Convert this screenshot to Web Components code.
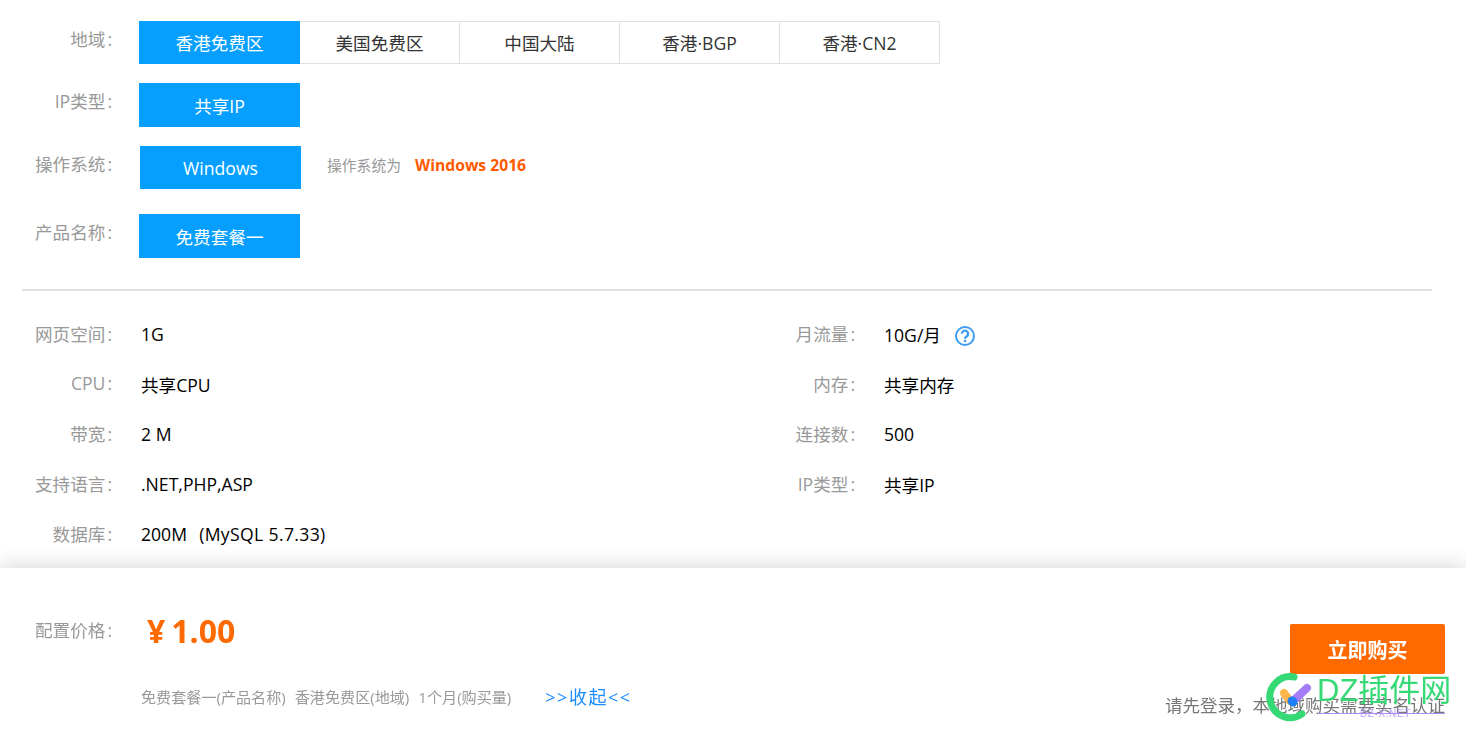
<!DOCTYPE html>
<html lang="zh">
<head>
<meta charset="utf-8">
<title>配置</title>
<style>
    html, body {
        margin: 0;
        height: 737px;
        overflow: hidden;
        background: #fff;
        font-family: "Open Sans", "Noto Sans CJK SC", sans-serif;
    }
</style>
</head>
<body>
<option-row label="地域" top="21">
    <option-btn active>香港免费区</option-btn>
    <option-btn>美国免费区</option-btn>
    <option-btn>中国大陆</option-btn>
    <option-btn>香港·BGP</option-btn>
    <option-btn>香港·CN2</option-btn>
</option-row>
<option-row label="IP类型" top="19">
    <option-btn active tall>共享IP</option-btn>
</option-row>
<option-row label="操作系统" top="19" shift>
    <option-btn active>Windows</option-btn>
    <os-note></os-note>
</option-row>
<option-row label="产品名称" top="25">
    <option-btn active tall>免费套餐一</option-btn>
</option-row>
<spec-table></spec-table>
<price-bar></price-bar>
<dz-mark></dz-mark>

<script>
class OptionBtn extends HTMLElement {
    constructor() {
        super();
        this.attachShadow({ mode: 'open' });
        this.shadowRoot.innerHTML = `
            <style>
                :host {
                    display: flex;
                    align-items: center;
                    justify-content: center;
                    box-sizing: border-box;
                    width: 160px;
                    height: 43px;
                    border: 1px solid #e0e0e0;
                    border-left: 0;
                    color: #333;
                    font-size: 17.6px;
                    background: #fff;
                }
                :host(:first-child) { width: 161px; border-left: 1px solid #e0e0e0; }
                :host([active]) {
                    background: #069fff;
                    border-color: #069fff;
                    color: #fff;
                }
                :host([tall]) { height: 44px; }
            </style>
            <slot></slot>
        `;
    }
}

class OptionRow extends HTMLElement {
    constructor() {
        super();
        this.attachShadow({ mode: 'open' });
        this.shadowRoot.innerHTML = `
            <style>
                :host { display: flex; align-items: flex-start; }
                .label {
                    width: 112px;
                    text-align: right;
                    color: #999;
                    font-size: 17.6px;
                    line-height: 36px;
                    white-space: nowrap;
                }
                .label span { margin-left: 2px; }
                .items { display: flex; align-items: center; margin-left: 27px; }
                :host([shift]) .items { margin-left: 28px; }
            </style>
            <div class="label"></div>
            <div class="items"><slot></slot></div>
        `;
    }

    connectedCallback() {
        this.style.marginTop = this.getAttribute('top') + 'px';
        this.shadowRoot.querySelector('.label').innerHTML = this.getAttribute('label') + '<span>:</span>';
    }
}

class OsNote extends HTMLElement {
    constructor() {
        super();
        this.attachShadow({ mode: 'open' });
        this.shadowRoot.innerHTML = `
            <style>
                :host {
                    display: flex;
                    align-items: center;
                    margin-left: 26px;
                    margin-top: -6px;
                    font-size: 14.8px;
                    color: #999;
                    white-space: nowrap;
                }
                b { color: #ff5a00; margin-left: 14px; font-size: 15.7px; }
            </style>
            操作系统为<b>Windows 2016</b>
        `;
    }
}

class SpecTable extends HTMLElement {
    constructor() {
        super();
        this.attachShadow({ mode: 'open' });
        const rows = [
            ['网页空间', '1G'],
            ['月流量', '10G/月', true],
            ['CPU', '共享CPU'],
            ['内存', '共享内存'],
            ['带宽', '2 M'],
            ['连接数', '500'],
            ['支持语言', '.NET,PHP,ASP'],
            ['IP类型', '共享IP'],
            ['数据库', '200M&nbsp;&nbsp;<span class="db">(MySQL 5.7.33)</span>']
        ];
        const cells = rows.map(([k, v, help]) => `
            <div class="cell">
                <span class="k">${k}<i>:</i></span>
                <span class="v">${v}</span>
                ${help ? `<svg width="22" height="22" viewBox="0 0 22 22"><circle cx="11" cy="11" r="9" fill="none" stroke="#3f9cf5" stroke-width="2"/><path d="M7.9 8.8a3.1 3.1 0 1 1 4.9 2.5c-1.1.8-1.8 1.2-1.8 2.5" fill="none" stroke="#3f9cf5" stroke-width="2.3"/><circle cx="11" cy="16" r="1.3" fill="#3f9cf5"/></svg>` : ''}
            </div>`).join('');
        this.shadowRoot.innerHTML = `
            <style>
                :host {
                    display: block;
                    margin: 31px 34px 0 22px;
                    border-top: 2px solid #e0e0e0;
                    padding-top: 19px;
                }
                .grid { display: grid; grid-template-columns: 743px 1fr; grid-auto-rows: 50px; }
                .cell { display: flex; align-items: center; height: 48px; padding-bottom: 2px; font-size: 17.6px; color: #000; white-space: nowrap; }
                .k { width: 90px; text-align: right; color: #999; margin-bottom: 2px; }
                .k i { font-style: normal; margin-left: 2px; }
                .v { margin-left: 29px; }
                .db { margin-left: 3px; letter-spacing: .35px; }
                svg { margin: 3px 0 0 13px; }
            </style>
            <div class="grid">${cells}</div>
        `;
    }
}

class PriceBar extends HTMLElement {
    constructor() {
        super();
        this.attachShadow({ mode: 'open' });
        this.shadowRoot.innerHTML = `
            <style>
                :host {
                    position: fixed;
                    left: 0;
                    right: 0;
                    bottom: 0;
                    height: 169px;
                    background: #fff;
                    box-shadow: 0 -2px 20px rgba(0, 0, 0, 0.16);
                    box-sizing: border-box;
                    padding: 40px 21px 0 0;
                    display: flex;
                    justify-content: space-between;
                }
                .left { display: flex; flex-direction: column; }
                .top { display: flex; align-items: center; height: 46px; }
                .k { width: 112px; text-align: right; color: #999; font-size: 17.6px; white-space: nowrap; padding-bottom: 4px; }
                .k i { font-style: normal; margin-left: 2px; }
                .price { margin: -2px 0 0 35px; color: #ff6a00; font-size: 32px; font-weight: bold; white-space: nowrap; }
                .price i { font-style: normal; margin-right: 6px; }
                .summary { display: flex; align-items: center; margin: 29px 0 0 141px; font-size: 15.1px; color: #999; white-space: nowrap; }
                .summary span + span { margin-left: 9px; }
                .summary .collapse { margin-left: 34px; color: #1a8cff; font-size: 18px; letter-spacing: 1.5px; }
                .right { display: flex; flex-direction: column; align-items: flex-end; padding-top: 16px; }
                .buy {
                    width: 155px;
                    height: 50px;
                    background: #ff6a00;
                    color: #fff;
                    border-radius: 2px;
                    font-size: 20px;
                    font-weight: bold;
                    display: flex;
                    align-items: center;
                    justify-content: center;
                }
                .login { margin-top: 18px; color: #777; font-size: 17.5px; line-height: 26px; white-space: nowrap; }
            </style>
            <div class="left">
                <div class="top"><span class="k">配置价格<i>:</i></span><span class="price"><i>¥</i>1.00</span></div>
                <div class="summary">
                    <span>免费套餐一(产品名称)</span>
                    <span>香港免费区(地域)</span>
                    <span>1个月(购买量)</span>
                    <span class="collapse">&gt;&gt;收起&lt;&lt;</span>
                </div>
            </div>
            <div class="right">
                <div class="buy">立即购买</div>
                <div class="login">请先登录，本地域购买需要实名认证</div>
            </div>
        `;
    }
}

// 右下角水印，盖在内容上面
class DzMark extends HTMLElement {
    constructor() {
        super();
        this.attachShadow({ mode: 'open' });
        this.shadowRoot.innerHTML = `
            <style>
                :host { position: fixed; left: 1264px; top: 670px; width: 190px; height: 54px; }
                svg { position: absolute; left: 0; top: 0; }
                .t { position: absolute; left: 53px; top: 1px; color: #35d975; font: 31px/40px "Liberation Sans", "Noto Sans CJK SC", sans-serif; white-space: nowrap; }
                .s { position: absolute; left: 96px; top: 38px; color: #b9a5fb; font: 10px/12px "Liberation Sans", sans-serif; letter-spacing: .6px; white-space: nowrap; }
                .u { position: absolute; left: 54px; top: 43px; width: 127px; height: 1px; background: #a98bfa; }
            </style>
            <svg width="54" height="54" viewBox="0 0 54 54">
                <path d="M30 7A20.5 20.5 0 1 0 38 44" fill="none" stroke="#35d975" stroke-width="7" stroke-linecap="round"/>
                <path d="M20 23L26 31" stroke="#fdb74a" stroke-width="8" stroke-linecap="round"/>
                <path d="M29 31L43 18" stroke="#a57cf9" stroke-width="8" stroke-linecap="round"/>
                <path d="M28 31L29 32" stroke="#1d7ff5" stroke-width="9" stroke-linecap="round"/>
            </svg>
            <span class="t">DZ插件网</span>
            <span class="s">DZ-X.NET</span>
            <span class="u"></span>
        `;
    }
}

customElements.define('option-btn', OptionBtn);
customElements.define('option-row', OptionRow);
customElements.define('os-note', OsNote);
customElements.define('spec-table', SpecTable);
customElements.define('price-bar', PriceBar);
customElements.define('dz-mark', DzMark);
</script>
</body>
</html>
